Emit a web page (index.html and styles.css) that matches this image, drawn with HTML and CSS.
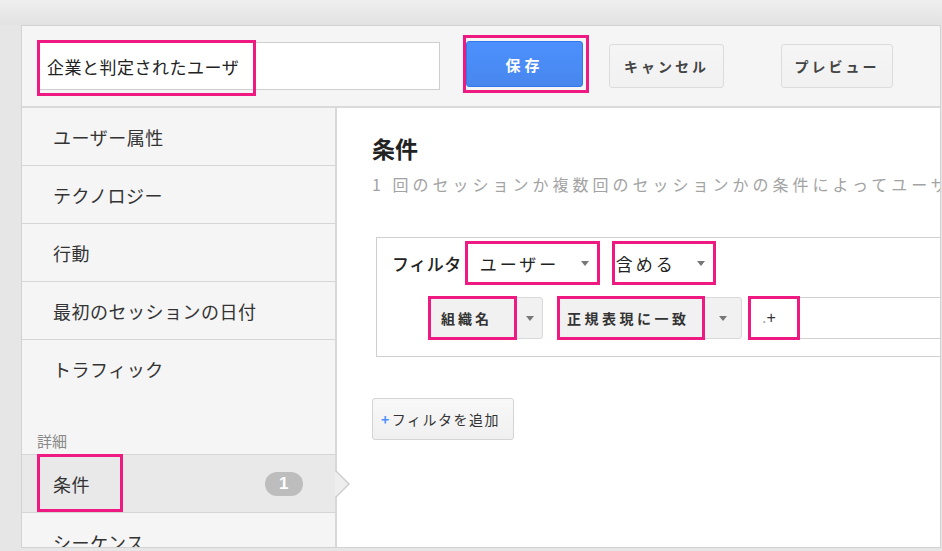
FILE: index.html
```html
<!DOCTYPE html>
<html>
  <head>
    <meta charset="utf-8">
    <title>セグメントの編集</title>
    <link rel="stylesheet" href="styles.css">
  </head>
  <body>
    <div class="frame">

      <div class="toolbar">
        <div class="name-box">
          <input class="name-input" type="text" value="企業と判定されたユーザ">
          <span class="mark name-mark"></span>
        </div>

        <div class="mark save-mark">
          <button class="button-save">保存</button>
        </div>

        <button class="button-plain">キャンセル</button>
        <button class="button-plain button-preview">プレビュー</button>
      </div>

      <div class="editor">
        <div class="side">
          <div class="side-item">ユーザー属性</div>
          <div class="side-item">テクノロジー</div>
          <div class="side-item">行動</div>
          <div class="side-item">最初のセッションの日付</div>
          <div class="side-item side-last">トラフィック</div>

          <div class="side-label">詳細</div>

          <div class="side-item side-active">
            条件
            <span class="badge">1</span>
            <span class="mark active-mark"></span>
            <svg class="pointer" width="16" height="28" viewBox="0 0 16 28">
              <polygon points="0,0 14,14 0,28" fill="#eeeeee"/>
              <polyline points="0,0 14,14 0,28" fill="none" stroke="#cfcfcf" stroke-width="1.5"/>
            </svg>
          </div>
          <div class="side-item">シーケンス</div>
        </div>

        <div class="main">
          <h2 class="title">条件</h2>
          <p class="desc">1 回のセッションか複数回のセッションかの条件によってユーザーを絞り込みます。</p>

          <div class="filter-box">
            <div class="filter-row">
              <span class="filter-name">フィルタ</span>
              <span class="mark select select-user">ユーザー<span class="caret"></span></span>
              <span class="mark select select-include">含める<span class="caret"></span></span>
            </div>

            <div class="filter-row row-rule">
              <div class="combo combo-dim">
                <span class="mark combo-label">組織名</span>
                <span class="combo-arrow"><span class="caret"></span></span>
              </div>
              <div class="combo combo-match">
                <span class="mark combo-label">正規表現に一致</span>
                <span class="combo-arrow"><span class="caret"></span></span>
              </div>
              <div class="value-box">
                <span class="mark value-text"><span class="dot">.</span>+</span>
              </div>
            </div>
          </div>

          <button class="button-add"><span class="plus">+</span>フィルタを追加</button>
        </div>
      </div>

    </div>
  </body>
</html>
```

FILE: styles.css
```css
html, body {
  width: 942px;
  height: 551px;
  overflow: hidden;
}

body {
  margin: 0;
  background: linear-gradient(#efefef, #e2e2e2) 0 0 / 100% 25px no-repeat, #e6e6e6;
  font-family: "Noto Sans CJK JP", "Noto Sans", sans-serif;
  color: #333;
}

.frame {
  box-sizing: border-box;
  margin: 25px 0 0 21px;
  width: 920px;
  height: 523px;
  border: 1px solid #d2d2d2;
  background-color: white;
}

.mark {
  box-sizing: border-box;
  border: 3px solid #ee1a82;
}

/* top bar */

.toolbar {
  display: flex;
  align-items: center;
  height: 80px;
  padding-left: 15px;
  background-color: #f5f5f5;
  border-bottom: 2px solid #dadada;
}

.name-box {
  position: relative;
  margin-right: 23px;
}

.name-input {
  box-sizing: border-box;
  display: block;
  width: 403px;
  height: 48px;
  padding: 0 0 0 9px;
  border: 1px solid #cfcfcf;
  background-color: white;
  font-family: "Noto Sans CJK JP", sans-serif;
  font-size: 17px;
  letter-spacing: 0.5px;
  color: #222;
  outline: none;
}

.name-mark {
  position: absolute;
  left: 0;
  top: -2px;
  width: 219px;
  height: 56px;
}

.save-mark {
  display: flex;
  width: 126px;
  height: 58px;
  padding: 3px 3px 3px 0;
  margin-bottom: 4px;
  margin-right: 20px;
}

.button-save {
  width: 117px;
  height: 46px;
  border: 1px solid #3079ed;
  border-radius: 3px;
  background: linear-gradient(#4d90fe, #4787ed);
  color: white;
  font-family: "Noto Sans CJK JP", sans-serif;
  font-size: 15px;
  font-weight: bold;
  letter-spacing: 4px;
}

.button-plain {
  width: 115px;
  height: 44px;
  border: 1px solid #dcdcdc;
  border-radius: 3px;
  background: linear-gradient(#f5f5f5, #f1f1f1);
  color: #444;
  font-family: "Noto Sans CJK JP", sans-serif;
  font-size: 14px;
  font-weight: bold;
  letter-spacing: 3px;
}

.button-preview {
  width: 112px;
  margin-left: 57px;
}

/* editor */

.editor {
  display: flex;
  height: 439px;
  overflow: hidden;
}

.side {
  flex: 0 0 313px;
  background-color: #f5f5f5;
  border-right: 2px solid #d8d8d8;
}

.side-item {
  position: relative;
  display: flex;
  align-items: center;
  height: 57px;
  padding-left: 31px;
  border-bottom: 1px solid #d6d6d6;
  font-size: 18px;
  letter-spacing: 0.5px;
  color: #333;
}

.side-last {
  border-bottom: none;
}

.side-label {
  box-sizing: border-box;
  height: 57px;
  padding: 34px 0 0 15px;
  font-size: 15px;
  line-height: 20px;
  color: #888;
}

.side-active {
  border-top: 1px solid #d6d6d6;
  background-color: #e9e9e9;
}

.badge {
  margin-left: auto;
  margin-right: 32px;
  width: 38px;
  height: 24px;
  border-radius: 12px;
  background-color: #bdbdbd;
  color: white;
  font-family: "Liberation Sans", sans-serif;
  font-size: 17px;
  font-weight: bold;
  line-height: 24px;
  text-align: center;
}

.active-mark {
  position: absolute;
  left: 15px;
  top: -1px;
  width: 86px;
  height: 58px;
}

.pointer {
  position: absolute;
  left: 313px;
  top: 15px;
}

.main {
  flex: 1;
  min-width: 0;
  padding: 25px 0 0 35px;
  background-color: white;
  overflow: hidden;
}

.title {
  margin: 0;
  font-size: 23px;
  line-height: 30px;
  font-weight: bold;
  color: #222;
}

.desc {
  margin: 11px 0 0 0;
  font-size: 16px;
  line-height: 20px;
  letter-spacing: 4px;
  color: #a3a3a3;
  white-space: nowrap;
}

.filter-box {
  box-sizing: border-box;
  height: 120px;
  margin: 43px 0 0 4px;
  padding: 3px 0 0 15px;
  border: 1px solid #cfcfcf;
  border-right: none;
}

.filter-row {
  display: flex;
  align-items: center;
  height: 44px;
}

.filter-name {
  font-size: 17px;
  font-weight: 500;
  color: #222;
  letter-spacing: 0.5px;
}

.select {
  display: flex;
  align-items: center;
  height: 44px;
  font-size: 17px;
  letter-spacing: 3px;
  color: #222;
}

.select-user {
  width: 135px;
  margin-left: 3px;
  padding: 0 8px 0 12px;
}

.select-include {
  width: 104px;
  margin-left: 12px;
  padding: 0 8px 0 1px;
}

.caret {
  margin-left: auto;
  width: 0;
  height: 0;
  border-left: 4px solid transparent;
  border-right: 4px solid transparent;
  border-top: 5px solid #777;
}

.row-rule {
  margin: 11px 0 0 36px;
}

.combo {
  box-sizing: border-box;
  display: flex;
  align-items: center;
  height: 42px;
  border: 1px solid #d9d9d9;
  border-radius: 3px;
  background-color: #f1f1f1;
}

.combo-label {
  display: flex;
  align-items: center;
  height: 44px;
  margin-left: -1px;
  font-size: 14px;
  font-weight: bold;
  color: #333;
}

.combo-arrow {
  flex: 1;
  display: flex;
  justify-content: center;
}

.combo-arrow .caret {
  margin-left: 0;
}

.combo-dim {
  width: 115px;
}

.combo-dim .combo-label {
  width: 89px;
  padding-left: 10px;
  letter-spacing: 3px;
}

.combo-match {
  width: 185px;
  margin-left: 14px;
}

.combo-match .combo-label {
  width: 148px;
  padding-left: 7px;
  letter-spacing: 3.5px;
}

.value-box {
  box-sizing: border-box;
  flex: 1;
  display: flex;
  align-items: center;
  height: 42px;
  margin-left: 6px;
  border: 1px solid #d0d0d0;
  border-right: none;
  background-color: white;
}

.value-text {
  display: flex;
  align-items: center;
  width: 52px;
  height: 44px;
  margin-left: -1px;
  padding-left: 11px;
  font-family: "Liberation Sans", sans-serif;
  font-size: 16px;
  color: #333;
}

.dot {
  color: #999;
}

.button-add {
  display: block;
  width: 142px;
  height: 42px;
  margin-top: 41px;
  padding: 0 0 0 8px;
  border: 1px solid #d4d4d4;
  border-radius: 3px;
  background: linear-gradient(#f8f8f8, #f0f0f0);
  font-family: "Noto Sans CJK JP", sans-serif;
  font-size: 14px;
  letter-spacing: 1.5px;
  color: #333;
  text-align: left;
}

.plus {
  color: #4d90fe;
  font-weight: bold;
  margin-right: 1px;
}
```
